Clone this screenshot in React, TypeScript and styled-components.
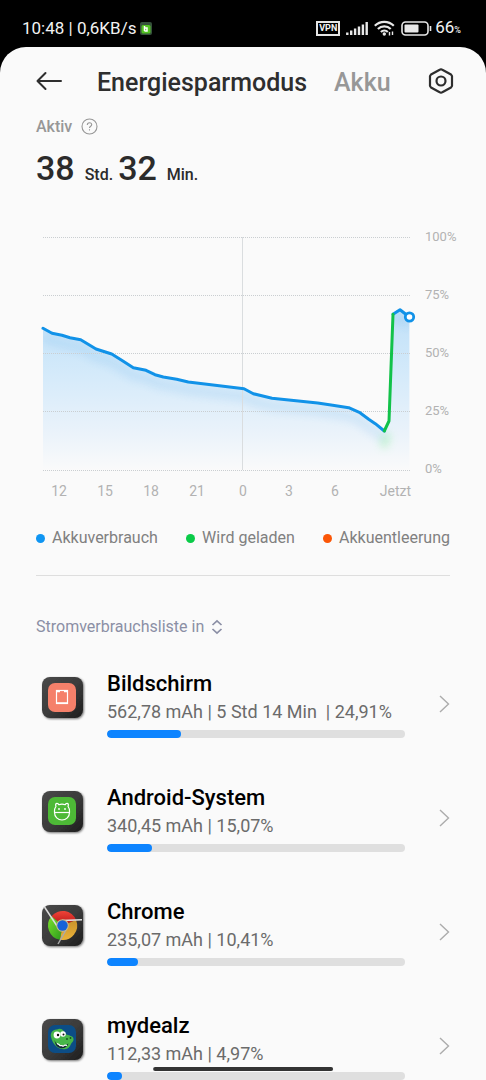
import React from "react";
import styled, { createGlobalStyle } from "styled-components";

const GlobalStyle = createGlobalStyle`
  *, *::before, *::after { box-sizing: border-box; }
  body {
    margin: 0;
    background: #000;
    font-family: Roboto, "Liberation Sans", sans-serif;
  }
  button {
    border: 0;
    padding: 0;
    background: none;
    font: inherit;
    color: inherit;
    cursor: pointer;
  }
  svg { display: block; flex: none; }
`;

const Screen = styled.div`
  height: 100vh;
  display: flex;
  flex-direction: column;
  overflow: hidden;
`;

const StatusBar = styled.div`
  flex: none;
  height: 47px;
  padding: 9px 25px 0 22px;
  display: flex;
  align-items: center;
  justify-content: space-between;
  color: #f2f2f2;
  font-size: 17px;
  line-height: 20px;
`;

const StatusGroup = styled.div<{ $gap: number }>`
  display: flex;
  align-items: center;
  gap: ${(p) => p.$gap}px;
`;

const VpnBadge = styled.span`
  width: 24px;
  height: 15px;
  border: 2px solid #e6e6e6;
  font-size: 9px;
  line-height: 11px;
  font-weight: 700;
  text-align: center;
`;

const Charge = styled.span`
  display: flex;
  align-items: baseline;
`;

const Percent = styled.span`
  font-size: 9px;
  font-weight: 500;
`;

const Sheet = styled.main`
  flex: 1;
  min-height: 0;
  overflow: hidden;
  padding: 0 36px;
  border-radius: 26px 26px 0 0;
  background: #fafafa;
`;

const Header = styled.header`
  height: 68px;
  margin-right: -4px;
  display: flex;
  align-items: center;
  color: #2e2e2e;
`;

const Tabs = styled.nav`
  flex: 1;
  display: flex;
  gap: 27px;
  padding: 4px 0 0 34px;
`;

const Tab = styled.button<{ $active?: boolean }>`
  font-size: 25px;
  line-height: 32px;
  font-weight: 500;
  color: ${(p) => (p.$active ? "#2e2e2e" : "#979797")};
`;

const IconButton = styled.button`
  display: block;
`;

const ActiveLabel = styled.div`
  display: flex;
  align-items: center;
  gap: 9px;
  height: 23px;
  color: #979797;
  font-size: 16px;
  line-height: 24px;
  font-weight: 500;
`;

const Runtime = styled.div`
  display: flex;
  align-items: baseline;
  margin-top: 10px;
  height: 89px;
  color: #2b2b2b;
  line-height: 40px;
`;

const RuntimeValue = styled.span`
  font-size: 34px;
  font-weight: 500;
`;

const RuntimeUnit = styled.span`
  padding: 0 5px 0 10px;
  font-size: 16px;
  font-weight: 500;
`;

const ChartGrid = styled.div`
  display: grid;
  grid-template-columns: 1fr 39px;
`;

const Plot = styled.div`
  padding-left: 7px;

  svg {
    width: 100%;
    height: auto;
    overflow: visible;
  }
`;

const YAxis = styled.div`
  display: flex;
  flex-direction: column;
  justify-content: space-between;
  margin: -8px -12px -6px 0;
  padding-left: 14px;
  color: #b2b2b2;
  font-size: 13px;
  line-height: 16px;
`;

const XAxis = styled.div`
  display: grid;
  grid-template-columns: repeat(7, 46fr) 53fr;
  padding-top: 11px;
  color: #b2b2b2;
  font-size: 14px;
  line-height: 18px;
  text-align: center;

  span:last-child { text-align: right; }
`;

const Legend = styled.ul`
  display: flex;
  justify-content: space-between;
  margin: 0;
  padding: 26px 0 25px;
  list-style: none;
  border-bottom: 1px solid #dedede;
  color: #808080;
  font-size: 16px;
  line-height: 24px;
`;

const LegendItem = styled.li<{ $color: string }>`
  display: flex;
  align-items: center;
  gap: 7px;

  &::before {
    content: "";
    width: 9px;
    height: 9px;
    border-radius: 50%;
    background: ${(p) => p.$color};
  }
`;

const SortButton = styled.button`
  display: flex;
  align-items: center;
  gap: 7px;
  margin-top: 39px;
  color: #8b8fa5;
  font-size: 16px;
  line-height: 24px;
`;

const AppList = styled.ul`
  margin: 0;
  padding: 31px 0 0;
  list-style: none;
`;

const AppItem = styled.li`
  height: 114px;
`;

const AppRow = styled.button`
  width: 100%;
  display: flex;
  align-items: center;
  text-align: left;
`;

const AppIcon = styled.svg`
  margin: 0 17px 12px 0;
`;

const AppInfo = styled.span`
  flex: 1;
  display: block;
`;

const AppName = styled.span`
  display: block;
  color: #000;
  font-size: 22px;
  line-height: 28px;
  font-weight: 500;
`;

const AppUsage = styled.span`
  display: block;
  color: #6b6b6b;
  font-size: 18px;
  line-height: 28px;
  white-space: pre;
`;

const Track = styled.span`
  display: block;
  height: 8px;
  margin-top: 4px;
  border-radius: 4px;
  background: #dfdfdf;
  overflow: hidden;
`;

const Fill = styled.span`
  display: block;
  height: 8px;
  border-radius: 4px;
  background: #0d84ff;
`;

const Chevron = styled.svg`
  margin-left: 34px;
`;

const HomeIndicator = styled.div`
  position: fixed;
  left: 50%;
  bottom: 9px;
  width: 37%;
  height: 4px;
  transform: translateX(-50%);
  border-radius: 2px;
  background: #333;
`;

const discharge =
  "M0 91.3L9 96.3L19 98.3L27 100.7L37.7 102.7L53 112L68.7 117L78.7 123.3L90.3 130.7L103 133.3L112 137.7L120.3 140L133.7 142.3L145.3 145L201 151.7L210.3 156.7L229 161.3L274.7 166L289.7 168.3L305.7 170.7L316.3 175.3L325.7 182.3L332.3 186.7L341.3 194";
const charging = "M341.3 194L346 184L350 77.3";
const latest = "M350 77.3L357 72.7L366.4 80";
const area =
  discharge + "L346 184L350 77.3L357 72.7L366.4 80V233H0Z";

function BatteryChart() {
  return (
    <svg viewBox="0 0 368 234" role="img" aria-label="Akkustand">
      <defs>
        <linearGradient id="area" x1="0" y1="72" x2="0" y2="233" gradientUnits="userSpaceOnUse">
          <stop offset="0" stopColor="#bfe0f8" />
          <stop offset="0.4" stopColor="#d4eafa" />
          <stop offset="0.75" stopColor="#e9f2fa" />
          <stop offset="1" stopColor="#fafafa" />
        </linearGradient>
        <clipPath id="under"><path d={area} /></clipPath>
        <filter id="soft" x="-20%" y="-20%" width="140%" height="150%">
          <feGaussianBlur stdDeviation="4" />
        </filter>
        <filter id="glow" x="-300%" y="-300%" width="700%" height="700%">
          <feGaussianBlur stdDeviation="4" />
        </filter>
      </defs>
      <path d={area} fill="url(#area)" />
      <g clipPath="url(#under)">
        <g fill="none" strokeWidth="8" opacity="0.14" filter="url(#soft)" transform="translate(0 8)">
          <path d={discharge} stroke="#3d9be6" />
          <path d={latest} stroke="#3d9be6" />
        </g>
      </g>
      <path d="M339 203L341.3 206L345 197" fill="none" stroke="#7df08c" strokeWidth="7" opacity="0.4" filter="url(#glow)" />
      <g stroke="#caced1" strokeDasharray="1 1">
        {[0.5, 58.5, 116.5, 174.5, 233.5].map((y) => (
          <path key={y} d={`M0 ${y}H368`} />
        ))}
      </g>
      <path d="M199.5 0V233" stroke="#dadddf" />
      <g fill="none" strokeWidth="3" strokeLinejoin="round" strokeLinecap="round">
        <path d={discharge} stroke="#1192e8" />
        <path d={latest} stroke="#1192e8" />
        <path d={charging} stroke="#12c24a" />
      </g>
      <circle cx="366.5" cy="80" r="4.2" fill="#fff" stroke="#1192e8" strokeWidth="2.8" />
    </svg>
  );
}

function Tile({ children }: { children: React.ReactNode }) {
  return (
    <AppIcon width="54" height="50" viewBox="0 0 54 50" aria-hidden="true">
      <defs>
        <linearGradient id="tile" x1="0" y1="0" x2="1" y2="1">
          <stop offset="0" stopColor="#494949" />
          <stop offset="0.5" stopColor="#3c3c3c" />
          <stop offset="1" stopColor="#1d1d1d" />
        </linearGradient>
        <filter id="drop" x="-20%" y="-20%" width="150%" height="150%">
          <feDropShadow dx="1" dy="1" stdDeviation="1" floodOpacity="0.55" />
        </filter>
      </defs>
      <rect x="6" y="4" width="41" height="41" rx="8" fill="url(#tile)" filter="url(#drop)" />
      {children}
    </AppIcon>
  );
}

const ScreenIcon = () => (
  <Tile>
    <rect x="12" y="10" width="28" height="29" rx="7" fill="#f5806a" />
    <rect x="20.5" y="17.5" width="11" height="13" fill="none" stroke="#fff" strokeWidth="1.2" />
    <path d="M20 18.500H24M28 18.500H32M20 30H32" stroke="#fff" strokeWidth="1.5" />
  </Tile>
);

const AndroidIcon = () => (
  <Tile>
    <rect x="12" y="10" width="28" height="28" rx="7" fill="#4db936" />
    <g fill="none" stroke="#fff" strokeWidth="1.200" strokeLinejoin="round">
      <path d="M18.500 24c0-2 .8-3.600 1.500-4.700-.8-1.600-.3-3 1-3 .9 0 1.500.5 1.800 1.400 2-.7 4.400-.7 6.400 0 .3-.9.900-1.400 1.800-1.400 1.300 0 1.800 1.400 1 3 .7 1.100 1.500 2.700 1.500 4.700v1.500a7.500 7.500 0 0 1-15 0z" />
      <path d="M18.500 25.500h15" />
    </g>
    <circle cx="23" cy="22" r="0.900" fill="#fff" />
    <circle cx="29" cy="22" r="0.900" fill="#fff" />
  </Tile>
);

const ChromeIcon = () => (
  <Tile>
    <defs>
      <linearGradient id="cr" x1="0" y1="0" x2="0" y2="1"><stop offset="0" stopColor="#f04438" /><stop offset="1" stopColor="#b81414" /></linearGradient>
      <linearGradient id="cg" x1="0" y1="0" x2="1" y2="1"><stop offset="0" stopColor="#7be02c" /><stop offset="1" stopColor="#2a9a1c" /></linearGradient>
      <linearGradient id="cy" x1="0" y1="0" x2="0" y2="1"><stop offset="0" stopColor="#c9922a" /><stop offset="1" stopColor="#e9b23a" /></linearGradient>
    </defs>
    <path d="M26.500 24.500L15.500 15.200A14.400 14.400 0 0 1 40 19z" fill="url(#cr)" />
    <path d="M26.500 24.500L15.500 15.200A14.400 14.400 0 0 0 24 38.700z" fill="url(#cg)" />
    <path d="M26.500 24.500L40 19A14.400 14.400 0 0 1 24 38.700z" fill="url(#cy)" />
    <path d="M8.500 6L21 25" stroke="#ddd" strokeWidth="1.500" />
    <path d="M26 19.400L46 18.800" stroke="#e4e4e4" strokeWidth="1.500" />
    <path d="M30 29L22 43" stroke="#aaa" strokeWidth="1.500" />
    <circle cx="26.500" cy="24.500" r="6.300" fill="#c9b98c" />
    <circle cx="26.500" cy="24.500" r="5.200" fill="#1762d8" />
  </Tile>
);

const MydealzIcon = () => (
  <Tile>
    <rect x="12" y="10" width="28" height="28" rx="7" fill="#0c4d86" />
    <path d="M15 22c-1-4 2-8 6-7.500 3-2 7 0 8 4 2 2 4 1 5.500 2.500 3 0 4 4 2 6-2 1.500-2 6-6.500 7-6 1.500-13-3-15-12z" fill="#47b649" />
    <path d="M18.500 25c2 6 7 7.500 14 3.500-1.500 4-5 5.500-8.500 4.500-3-.8-5-3.500-5.500-8z" fill="#123" />
    <path d="M21 28.500l2 1 1 1.200 2-.2 1 .8 2-1.200 2 .2" fill="none" stroke="#fff" strokeWidth="1.200" />
    <circle cx="21" cy="20" r="3.400" fill="#fff" />
    <circle cx="27" cy="19" r="2.800" fill="#fff" />
    <circle cx="22" cy="20" r="1.200" fill="#111" />
    <circle cx="27.500" cy="19.500" r="1" fill="#111" />
    <circle cx="31" cy="24" r="0.900" fill="#174d25" />
    <circle cx="34.500" cy="23" r="0.900" fill="#174d25" />
  </Tile>
);

const apps = [
  { name: "Bildschirm", usage: "562,78 mAh | 5 Std 14 Min  | 24,91%", share: 24.91, Icon: ScreenIcon },
  { name: "Android-System", usage: "340,45 mAh | 15,07%", share: 15.07, Icon: AndroidIcon },
  { name: "Chrome", usage: "235,07 mAh | 10,41%", share: 10.41, Icon: ChromeIcon },
  { name: "mydealz", usage: "112,33 mAh | 4,97%", share: 4.97, Icon: MydealzIcon },
];

export default function App() {
  return (
    <Screen>
      <GlobalStyle />
      <StatusBar>
        <StatusGroup $gap={4}>
          <span>10:48 | 0,6KB/s</span>
          <svg width="12" height="13" viewBox="0 0 12 13" aria-hidden="true">
            <rect width="12" height="13" rx="2" fill="#35503a" />
            <rect x="1.500" y="3" width="9" height="8.500" rx="1.500" fill="#52c222" />
            <path d="M4.500 4v5M4.500 6h2.500v3h-2.500" fill="none" stroke="#fff" strokeWidth="1.500" />
          </svg>
        </StatusGroup>
        <StatusGroup $gap={6}>
          <VpnBadge>VPN</VpnBadge>
          <svg width="22" height="15" viewBox="0 0 22 15" aria-hidden="true">
            <path d="M1.300 11.500V14M5.200 9.500V14M9.100 7.500V14M13 5.500V14M16.900 3.500V14M20.700 1V14" stroke="#e8e8e8" strokeWidth="2.400" />
          </svg>
          <svg width="21" height="16" viewBox="0 0 21 16" aria-hidden="true">
            <g fill="none" stroke="#e8e8e8" strokeWidth="2.200">
              <path d="M.8 5.800a13.500 13.500 0 0 1 19 0" />
              <path d="M3.900 9a9 9 0 0 1 12.800 0" />
              <path d="M6.900 12a4.900 4.900 0 0 1 6.900 0" />
            </g>
            <circle cx="10.300" cy="14" r="1.700" fill="#e8e8e8" />
            <path d="M15.500 12v3.500M18.500 15v-3.500" stroke="#e8e8e8" strokeWidth="1.400" />
          </svg>
          <StatusGroup $gap={3}>
            <svg width="31" height="15" viewBox="0 0 31 15" aria-hidden="true">
              <rect x="1" y="1" width="26" height="13" rx="3.500" fill="none" stroke="#e8e8e8" strokeWidth="1.600" />
              <rect x="3.500" y="3.500" width="14" height="8" rx="1" fill="#e8e8e8" />
              <path d="M29.500 5v5" stroke="#e8e8e8" strokeWidth="1.600" />
            </svg>
            <Charge>66<Percent>%</Percent></Charge>
          </StatusGroup>
        </StatusGroup>
      </StatusBar>
      <Sheet>
        <Header>
          <IconButton aria-label="Zurück">
            <svg width="27" height="20" viewBox="0 0 27 20" fill="none" stroke="currentColor" strokeWidth="2" strokeLinecap="round" strokeLinejoin="round">
              <path d="M25 10H1.500M9.500 2L1.500 10L9.500 18" />
            </svg>
          </IconButton>
          <Tabs>
            <Tab $active>Energiesparmodus</Tab>
            <Tab>Akku</Tab>
          </Tabs>
          <IconButton aria-label="Einstellungen">
            <svg width="26" height="26" viewBox="0 0 26 26" fill="none" stroke="currentColor" strokeWidth="2.200" strokeLinejoin="round">
              <path d="M13 1.300l1.300.4 8.700 4.800 1 1.500v10l-1 1.500-8.700 4.800-1.300.4-1.300-.4-8.700-4.800-1-1.500V8l1-1.500 8.700-4.800z" />
              <circle cx="13" cy="13" r="4.500" />
            </svg>
          </IconButton>
        </Header>
        <ActiveLabel>
          Aktiv
          <IconButton aria-label="Hilfe">
            <svg width="17" height="17" viewBox="0 0 17 17" fill="none" stroke="currentColor" strokeWidth="1.100">
              <circle cx="8.500" cy="8.500" r="7.500" />
              <path d="M6.300 6.900c0-1.300.9-2.200 2.200-2.200s2.200.8 2.200 2c0 1.500-2.200 1.700-2.200 3.400M8.500 11.200v1.300" />
            </svg>
          </IconButton>
        </ActiveLabel>
        <Runtime>
          <RuntimeValue>38</RuntimeValue>
          <RuntimeUnit>Std.</RuntimeUnit>
          <RuntimeValue>32</RuntimeValue>
          <RuntimeUnit>Min.</RuntimeUnit>
        </Runtime>
        <ChartGrid>
          <Plot><BatteryChart /></Plot>
          <YAxis>
            {["100%", "75%", "50%", "25%", "0%"].map((label) => <span key={label}>{label}</span>)}
          </YAxis>
          <XAxis>
            {["12", "15", "18", "21", "0", "3", "6", "Jetzt"].map((label) => <span key={label}>{label}</span>)}
          </XAxis>
        </ChartGrid>
        <Legend>
          <LegendItem $color="#0f95f2">Akkuverbrauch</LegendItem>
          <LegendItem $color="#0acb48">Wird geladen</LegendItem>
          <LegendItem $color="#fb5607">Akkuentleerung</LegendItem>
        </Legend>
        <SortButton>
          Stromverbrauchsliste in
          <svg width="12" height="16" viewBox="0 0 12 16" fill="none" stroke="currentColor" strokeWidth="1.700" aria-hidden="true">
            <path d="M1.500 6L6 1.800L10.500 6M1.500 10L6 14.200L10.500 10" />
          </svg>
        </SortButton>
        <AppList>
          {apps.map(({ name, usage, share, Icon }) => (
            <AppItem key={name}>
              <AppRow>
                <Icon />
                <AppInfo>
                  <AppName>{name}</AppName>
                  <AppUsage>{usage}</AppUsage>
                  <Track><Fill style={{ width: `${share}%` }} /></Track>
                </AppInfo>
                <Chevron width="11" height="18" viewBox="0 0 11 18" fill="none" stroke="#acacac" strokeWidth="1.400" aria-hidden="true">
                  <path d="M1 1L9.500 9L1 17" />
                </Chevron>
              </AppRow>
            </AppItem>
          ))}
        </AppList>
      </Sheet>
      <HomeIndicator />
    </Screen>
  );
}
